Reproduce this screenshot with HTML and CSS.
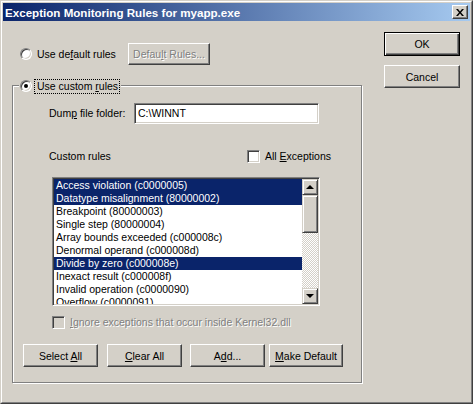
FILE: index.html
```html
<!DOCTYPE html>
<html>
<head>
<meta charset="utf-8">
<link rel="stylesheet" href="styles.css">
</head>
<body>
<div class="window">
  <div class="frame">
    <div class="titlebar">
      <span class="title">Exception Monitoring Rules for myapp.exe</span>
      <span class="closebtn"><svg width="8" height="7" viewBox="0 0 8 7"><path d="M0 0h2l2 2.5 2-2.5h2l-3 3.5 3 3.5h-2l-2-2.5-2 2.5h-2l3-3.5z" fill="#000"/></svg></span>
    </div>
    <div class="client">
      <div class="leftcol">
        <div class="row1">
          <span class="radio"></span>
          <span class="lbl lbl-default">Use de<u>f</u>ault rules</span>
          <span class="btn disabled btn-defrules"><span class="dis">Defau<u>l</u>t Rules...</span></span>
        </div>
        <div class="groupbox">
          <div class="legend">
            <span class="radio checked"><span class="dot"></span></span>
            <span class="lbl focus">Use custom <u>r</u>ules</span>
          </div>
          <div class="dumprow">
            <span class="lbl dumplbl">Dum<u>p</u> file folder:</span>
            <span class="textbox">C:\WINNT</span>
          </div>
          <div class="customrow">
            <span class="lbl customlbl">Custom rules</span>
            <span class="check"></span>
            <span class="lbl">All <u>E</u>xceptions</span>
          </div>
          <div class="listbox">
            <div class="items">
              <div class="item sel">Access violation (c0000005)</div>
              <div class="item sel">Datatype misalignment (80000002)</div>
              <div class="item">Breakpoint (80000003)</div>
              <div class="item">Single step (80000004)</div>
              <div class="item">Array bounds exceeded (c000008c)</div>
              <div class="item">Denormal operand (c000008d)</div>
              <div class="item sel">Divide by zero (c000008e)</div>
              <div class="item">Inexact result (c000008f)</div>
              <div class="item">Invalid operation (c0000090)</div>
              <div class="item">Overflow (c0000091)</div>
              <div class="item">Stack check (c0000092)</div>
            </div>
            <div class="scrollbar">
              <span class="sbtn"><span class="arrow up"></span></span>
              <span class="thumb"></span>
              <span class="track"></span>
              <span class="sbtn"><span class="arrow down"></span></span>
            </div>
          </div>
          <div class="ignorerow">
            <span class="check disabledcheck"></span>
            <span class="lbl dis"><u>I</u>gnore exceptions that occur inside Kernel32.dll</span>
          </div>
          <div class="btnrow">
            <span class="btn b-select"><span>Select <u>A</u>ll</span></span>
            <span class="btn b-clear"><span><u>C</u>lear All</span></span>
            <span class="btn b-add"><span>A<u>d</u>d...</span></span>
            <span class="btn b-make"><span><u>M</u>ake Default</span></span>
          </div>
        </div>
      </div>
      <div class="rightcol">
        <span class="btn default"><span>OK</span></span>
        <span class="btn cancel"><span>Cancel</span></span>
      </div>
    </div>
  </div>
</div>
</body>
</html>
```
FILE: styles.css
```css
html, body {
  margin: 0;
  padding: 0;
  background: #d4d0c8;
}
body {
  font-family: "Liberation Sans", Arial, sans-serif;
  font-size: 10.5px;
  color: #000;
}
.window {
  width: 473px;
  height: 404px;
  box-sizing: border-box;
  border: 1px solid;
  border-color: #d4d0c8 #404040 #404040 #d4d0c8;
  background: #d4d0c8;
}
.frame {
  height: 100%;
  box-sizing: border-box;
  border: 1px solid;
  border-color: #fff #808080 #808080 #fff;
  padding: 1px;
  display: flex;
  flex-direction: column;
}
.titlebar {
  height: 18px;
  flex: none;
  background: linear-gradient(to right, #0a246a, #a6caf0);
  display: flex;
  align-items: center;
  justify-content: space-between;
  padding-left: 2px;
}
.title {
  color: #fff;
  font-weight: bold;
  font-size: 11.6px;
  white-space: nowrap;
}
.closebtn {
  width: 16px;
  height: 14px;
  box-sizing: border-box;
  margin-right: 2px;
  background: #d4d0c8;
  border: 1px solid;
  border-color: #fff #404040 #404040 #fff;
  box-shadow: inset -1px -1px 0 #808080;
  display: flex;
  align-items: center;
  justify-content: center;
}
.client {
  flex: 1;
  display: flex;
}
.leftcol {
  width: 381px;
  flex: none;
}
.rightcol {
  display: flex;
  flex-direction: column;
  padding-top: 11px;
}
.lbl {
  white-space: nowrap;
  line-height: 13px;
}
.dis {
  color: #808080;
  text-shadow: 1px 1px 0 #fff;
}
.btn {
  display: flex;
  align-items: center;
  justify-content: center;
  box-sizing: border-box;
  height: 23px;
  width: 75px;
  background: #d4d0c8;
  border: 1px solid;
  border-color: #fff #404040 #404040 #fff;
  box-shadow: inset -1px -1px 0 #808080;
  white-space: nowrap;
}
.btn.default {
  width: 76px;
  height: 24px;
  border: 1px solid #000;
  box-shadow: inset 1px 1px 0 #fff, inset -1px -1px 0 #404040, inset -2px -2px 0 #808080;
}
.btn.cancel {
  width: 76px;
  margin-top: 9px;
}
.row1 {
  margin-top: 22px;
  height: 22px;
  display: flex;
  align-items: center;
}
.radio {
  width: 12px;
  height: 12px;
  box-sizing: border-box;
  border-radius: 50%;
  background: #fff;
  border: 1px solid;
  border-color: #808080 #fff #fff #808080;
  box-shadow: inset 1px 1px 0 #404040, inset -1px -1px 0 #d4d0c8;
  flex: none;
  display: flex;
  align-items: center;
  justify-content: center;
}
.row1 .radio {
  margin-left: 17px;
}
.dot {
  width: 4px;
  height: 4px;
  border-radius: 50%;
  background: #000;
}
.lbl-default {
  margin-left: 5px;
  width: 91px;
}
.btn-defrules {
  width: 82px;
  height: 22px;
}
.groupbox {
  margin-top: 20px;
  margin-left: 9px;
  width: 350px;
  height: 298px;
  box-sizing: border-box;
  border: 1px solid #808080;
  box-shadow: inset 1px 1px 0 #fff, 1px 1px 0 #fff;
}
.legend {
  margin-top: -7px;
  margin-left: 6px;
  padding: 0 2px 0 1px;
  width: fit-content;
  display: flex;
  align-items: center;
  height: 14px;
  background: #d4d0c8;
}
.legend .lbl {
  margin-left: 3px;
}
.focus {
  outline: 1px dotted #000;
  padding: 0 1px 0 2px;
}
.dumprow {
  margin-top: 10px;
  margin-left: 36px;
  display: flex;
  align-items: center;
}
.dumplbl {
  width: 85px;
}
.textbox {
  width: 185px;
  height: 21px;
  box-sizing: border-box;
  background: #fff;
  border: 1px solid;
  border-color: #808080 #fff #fff #808080;
  box-shadow: inset 1px 1px 0 #404040, inset -1px -1px 0 #d4d0c8;
  padding: 3px 0 0 3px;
  line-height: 13px;
}
.customrow {
  margin-top: 25px;
  margin-left: 36px;
  display: flex;
  align-items: center;
  height: 14px;
}
.customlbl {
  width: 198px;
}
.check {
  width: 13px;
  height: 13px;
  box-sizing: border-box;
  background: #fff;
  border: 1px solid;
  border-color: #808080 #fff #fff #808080;
  box-shadow: inset 1px 1px 0 #404040, inset -1px -1px 0 #d4d0c8;
  margin-right: 5px;
  flex: none;
}
.disabledcheck {
  background: #d4d0c8;
}
.listbox {
  margin-top: 14px;
  margin-left: 39px;
  width: 268px;
  height: 129px;
  box-sizing: border-box;
  background: #fff;
  border: 1px solid;
  border-color: #808080 #fff #fff #808080;
  box-shadow: inset 1px 1px 0 #404040, inset -1px -1px 0 #d4d0c8;
  padding: 1px;
  display: flex;
}
.items {
  flex: 1;
  overflow: hidden;
}
.item {
  height: 13px;
  line-height: 13px;
  padding-left: 2px;
  white-space: nowrap;
}
.item.sel {
  background: #0a246a;
  color: #fff;
}
.scrollbar {
  width: 16px;
  flex: none;
  display: flex;
  flex-direction: column;
}
.sbtn, .thumb {
  height: 16px;
  box-sizing: border-box;
  background: #d4d0c8;
  border: 1px solid;
  border-color: #d4d0c8 #404040 #404040 #d4d0c8;
  box-shadow: inset 1px 1px 0 #fff, inset -1px -1px 0 #808080;
  display: flex;
  align-items: center;
  justify-content: center;
  flex: none;
}
.thumb {
  height: 38px;
}
.track {
  flex: 1;
  background-color: #d4d0c8;
  background-image: repeating-conic-gradient(#fff 0 25%, #d4d0c8 0 50%);
  background-size: 2px 2px;
}
.arrow {
  width: 0;
  height: 0;
  border-left: 4px solid transparent;
  border-right: 4px solid transparent;
}
.arrow.up {
  border-bottom: 4px solid #000;
}
.arrow.down {
  border-top: 4px solid #000;
}
.ignorerow {
  margin-top: 10px;
  margin-left: 39px;
  display: flex;
  align-items: center;
  height: 13px;
}
.btnrow {
  margin-top: 15px;
  margin-left: 10px;
  display: flex;
}
.b-clear {
  margin-left: 9px;
}
.b-add {
  margin-left: 8px;
}
.b-make {
  margin-left: 4px;
  width: 74px;
}
```
